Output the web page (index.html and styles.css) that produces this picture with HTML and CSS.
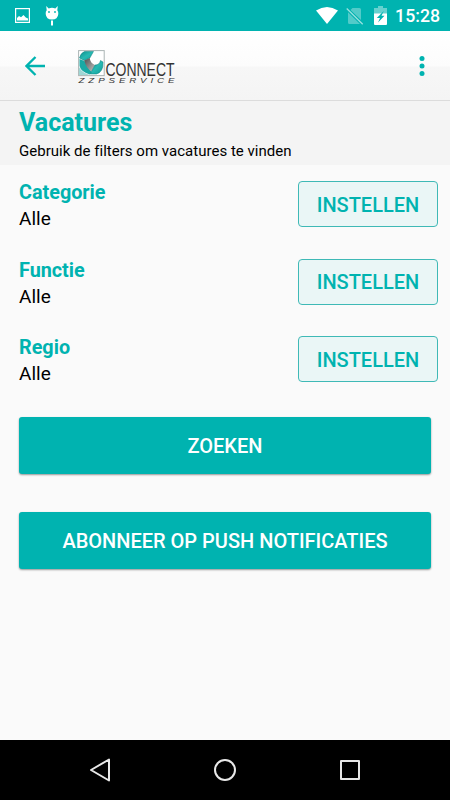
FILE: index.html
```html
<!DOCTYPE html>
<html lang="nl">
<head>
	<meta charset="UTF-8">
	<title>Vacatures</title>
	<link rel="stylesheet" href="styles.css">
</head>
<body>
	<div class="statusbar">
		<svg class="icon-picture" width="15" height="15" viewBox="0 0 15 15">
			<rect x="0.6" y="0.6" width="13.8" height="13.8" fill="none" stroke="#fff" stroke-width="1.2"/>
			<path d="M2 12.6V10l2-2 2 1.2L8.5 7l2.3 2.6 2.2 1V12.6z" fill="#fff"/>
		</svg>
		<svg class="icon-debug" width="14" height="20" viewBox="0 0 14 20">
			<path d="M1.2 0l2.5 2.4Q7 1.2 10.3 2.4L12.8 0l-.5 4.2Q13.500 5.500 13.300 8 12.800 13.500 7 13.500 1.200 13.500 .7 8 .5 5.500 1.700 4.200z" fill="#fff"/>
			<rect x="6" y="14.500" width="2" height="5" fill="#fff"/>
			<circle cx="4" cy="6" r=".9" fill="#00b3b0"/>
			<circle cx="10" cy="6" r=".9" fill="#00b3b0"/>
		</svg>
		<div class="status-right">
			<svg class="icon-wifi" width="22" height="17" viewBox="0 0 22 17">
				<path d="M0 3.600Q11-3.600 22 3.600L11 17z" fill="#fff"/>
			</svg>
			<svg class="icon-sim" width="18" height="18" viewBox="0 0 18 18">
				<path d="M6.500 1H13.500Q15 1 15 2.500V13L4.500 3zM2 5.200L14 17H3.500Q2 17 2 15.500z" fill="#fff" opacity=".32"/>
				<path d="M.7 1.500L16.700 17.300" stroke="#fff" stroke-width="1.300" opacity=".6"/>
			</svg>
			<svg class="icon-battery" width="13" height="19" viewBox="0 0 13 19">
				<path d="M4 0h5v2h4v6H0V2h4z" fill="#fff" opacity=".4"/>
				<path d="M0 7.500h13V18q0 1-1 1H1q-1 0-1-1z" fill="#fff"/>
				<path d="M9.800 5L2.800 12H6L4 16.500 10.500 9.800H7.500z" fill="#00b3b0"/>
			</svg>
			<span class="clock">15:28</span>
		</div>
	</div>

	<div class="appbar">
		<svg class="icon-back" width="20" height="20" viewBox="0 0 20 20">
			<path d="M20 10H2M10.500 1L1.500 10l9 9" fill="none" stroke="#00b3b0" stroke-width="2.300"/>
		</svg>
		<svg class="logo" width="98" height="35" viewBox="0 0 98 35">
			<defs>
				<linearGradient id="steel" x1="0" y1="0" x2="1" y2="1">
					<stop offset="0" stop-color="#4d4d4d"/>
					<stop offset="1" stop-color="#c4c4c4"/>
				</linearGradient>
				<linearGradient id="teal" x1="0" y1="0" x2="1" y2="1">
					<stop offset="0" stop-color="#0c8f8b"/>
					<stop offset=".5" stop-color="#27b9b3"/>
					<stop offset="1" stop-color="#119e99"/>
				</linearGradient>
			</defs>
			<rect x=".6" y=".6" width="25.600" height="25" fill="#fff" stroke="#aab4b4"/>
			<path d="M1 17V25H12Q4 23 1 17z" fill="#9fd6d4"/>
			<path d="M1.500 9L6.500 11 14 22.500 12 24.500Q3 22 1.500 16z" fill="#19a9a4"/>
			<path d="M1.500 8Q2.500 3 6.500 1.500H15.500L11.800 8 6.300 10.500z" fill="url(#teal)" stroke="#0b7f7c" stroke-width=".5"/>
			<path d="M6.300 10.500L11.800 8Q12 13 17 15L13.500 21.500Q8 18 6.300 10.500z" fill="url(#steel)"/>
			<path d="M17 15Q21.500 15 22.500 10.500L25 12Q25.500 22 18.500 24H12.500L13.500 21.500z" fill="url(#teal)" stroke="#0b7f7c" stroke-width=".5"/>
			<text class="logo-name" x="27.500" y="25.800" textLength="69" lengthAdjust="spacingAndGlyphs">CONNECT</text>
			<text class="logo-sub" transform="translate(.5 32.800) scale(1.500 1)" x="0" y="0" textLength="64" lengthAdjust="spacing">ZZPSERVICE</text>
		</svg>
		<svg class="icon-more" width="6" height="20" viewBox="0 0 6 20">
			<circle cx="3" cy="2.500" r="2.500" fill="#00b3b0"/>
			<circle cx="3" cy="10" r="2.500" fill="#00b3b0"/>
			<circle cx="3" cy="17.500" r="2.500" fill="#00b3b0"/>
		</svg>
	</div>

	<div class="header">
		<h1>Vacatures</h1>
		<p>Gebruik de filters om vacatures te vinden</p>
	</div>

	<div class="filters">
		<div class="filter">
			<div class="filter-text">
				<h2>Categorie</h2>
				<p>Alle</p>
			</div>
			<button class="set">INSTELLEN</button>
		</div>
		<div class="filter">
			<div class="filter-text">
				<h2>Functie</h2>
				<p>Alle</p>
			</div>
			<button class="set">INSTELLEN</button>
		</div>
		<div class="filter">
			<div class="filter-text">
				<h2>Regio</h2>
				<p>Alle</p>
			</div>
			<button class="set">INSTELLEN</button>
		</div>
	</div>

	<div class="actions">
		<button class="action">ZOEKEN</button>
		<button class="action">ABONNEER OP PUSH NOTIFICATIES</button>
	</div>

	<div class="navbar">
		<svg width="24" height="26" viewBox="0 0 24 26">
			<path d="M21 2.500V23.500L3 13z" fill="none" stroke="#e8e8e8" stroke-width="2" stroke-linejoin="round"/>
		</svg>
		<svg width="24" height="26" viewBox="0 0 24 26">
			<circle cx="12" cy="13" r="10" fill="none" stroke="#e8e8e8" stroke-width="2"/>
		</svg>
		<svg width="24" height="26" viewBox="0 0 24 26">
			<rect x="3" y="4" width="18" height="18" fill="none" stroke="#e8e8e8" stroke-width="2" stroke-linejoin="round"/>
		</svg>
	</div>
</body>
</html>
```

FILE: styles.css
```css
*{
	margin: 0;
	padding: 0;
	box-sizing: border-box;
}

body{
	display: flex;
	flex-direction: column;
	width: 450px;
	height: 800px;
	overflow: hidden;
	background: #fafafa;
	color: #000;
	font-family: Roboto, sans-serif;
}

svg{
	display: block;
	flex: none;
}

.statusbar{
	display: flex;
	align-items: flex-start;
	height: 31px;
	padding-left: 15px;
	background: #00b3b0;
}

.icon-picture{
	margin-top: 8px;
}

.icon-debug{
	margin: 6px 0 0 15px;
}

.status-right{
	display: flex;
	align-items: flex-start;
	margin-left: auto;
	padding-right: 10px;
}

.icon-wifi{
	margin-top: 7px;
}

.icon-sim{
	margin: 7px 0 0 8px;
}

.icon-battery{
	margin: 6px 0 0 10px;
}

.clock{
	margin-left: 8px;
	color: #fff;
	font-size: 17.7px;
	font-weight: 500;
	line-height: 33px;
}

.appbar{
	display: flex;
	align-items: flex-start;
	height: 70px;
	padding: 0 25px;
	background: linear-gradient(#fff 0, #fcfcfc 51%, #f7f7f7 52%, #f4f4f4 100%);
	border-bottom: 1px solid #dcdcdc;
}

.icon-back{
	margin-top: 25px;
}

.logo{
	margin: 19px 0 0 33px;
	overflow: visible;
}

.logo-name{
	fill: #333;
	font-family: "Liberation Sans", sans-serif;
	font-size: 19px;
}

.logo-sub{
	fill: #333;
	font-family: "Liberation Sans", sans-serif;
	font-size: 6.5px;
	font-style: italic;
}

.icon-more{
	margin: 25px 0 0 auto;
}

.header{
	height: 64px;
	padding: 7px 19px 0;
	background: #f4f4f4;
}

.header h1{
	color: #00b3b0;
	font-size: 25px;
	font-weight: 700;
	line-height: 30px;
}

.header p{
	margin-top: 3px;
	font-size: 15px;
	letter-spacing: 0.02px;
	line-height: 20px;
}

.filters{
	padding: 14px 12px 0 19px;
}

.filter{
	display: flex;
	justify-content: space-between;
	height: 77.5px;
}

.filter-text{
	padding-top: 1px;
}

.filter h2{
	color: #00b3b0;
	font-size: 19.8px;
	font-weight: 700;
	line-height: 26px;
}

.filter p{
	font-size: 19px;
	line-height: 26px;
}

.set{
	width: 140px;
	height: 46px;
	margin-top: 2px;
	padding-top: 1px;
	background: #eaf6f6;
	border: 1px solid #3fb9b6;
	border-radius: 4px;
	color: #00b3b0;
	font-family: inherit;
	font-size: 20px;
	font-weight: 500;
}

.actions{
	display: flex;
	flex-direction: column;
	gap: 38px;
	padding: 5px 19px 0;
}

.action{
	height: 57px;
	padding-top: 2px;
	background: #00b3b0;
	border: none;
	border-radius: 3px;
	box-shadow: 0 1px 2px rgba(0,0,0,0.4);
	color: #fff;
	font-family: inherit;
	font-size: 20px;
	font-weight: 500;
}

.navbar{
	display: flex;
	justify-content: center;
	align-items: center;
	gap: 101px;
	height: 60px;
	margin-top: auto;
	background: #000;
}
```
